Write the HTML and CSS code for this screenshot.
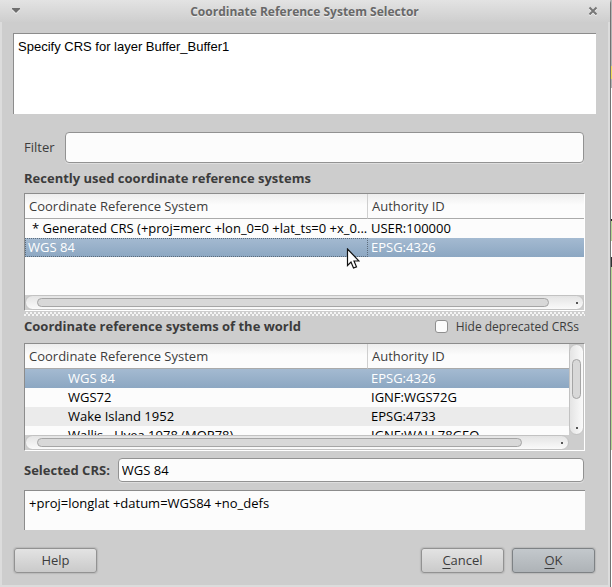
FILE: index.html
```html
<!DOCTYPE html>
<html lang="en">
<head>
<meta charset="utf-8">
<title>Coordinate Reference System Selector</title>
<link rel="stylesheet" href="styles.css">
</head>
<body>
<main class="dialog">
  <header class="titlebar">
    <button class="title-button" aria-label="Window menu"><svg width="10" height="6" viewBox="0 0 10 6"><path d="M1 2h8L5 6z" fill="#f4f4f4"/><path d="M1 0h8v1L5 5 1 1z" fill="#6e6e6e"/></svg></button>
    <h1 class="title">Coordinate Reference System Selector</h1>
    <button class="title-button" aria-label="Close"><svg width="10" height="10" viewBox="0 0 10 10"><path d="M1.5 2.5l7 7M8.5 2.5l-7 7" stroke="#f2f2f2" stroke-width="2"/><path d="M1.5 1.5l7 7M8.500 1.500l-7 7" stroke="#777" stroke-width="2"/></svg></button>
  </header>
  <div class="body">
    <div class="sunken message">Specify CRS for layer Buffer_Buffer1</div>
    <div class="selector">
      <div class="field filter">
        <label for="filter">Filter</label>
        <input class="text-input" id="filter" type="text">
      </div>
      <h2 class="heading">Recently used coordinate reference systems</h2>
      <div class="list recent">
        <div class="viewport">
          <table class="table">
            <thead><tr><th>Coordinate Reference System</th><th>Authority ID</th></tr></thead>
            <tbody>
              <tr><td class="generated">* Generated CRS (+proj=merc +lon_0=0 +lat_ts=0 +x_0...</td><td>USER:100000</td></tr>
              <tr class="selected"><td class="focused">WGS 84</td><td>EPSG:4326</td></tr>
            </tbody>
          </table>
          <svg class="cursor" width="14" height="22" viewBox="0 0 14 22"><path d="M1.500 1v16.500l3.500-3.500 2.500 6 3-1.200-2.500-5.800h5z" fill="#fff" stroke="#111" stroke-width="1.200"/></svg>
        </div>
        <div class="track"><div class="hbar"><div class="thumb"></div></div></div>
      </div>
      <div class="splitter"></div>
      <div class="world-head">
        <h2 class="heading">Coordinate reference systems of the world</h2>
        <label class="check"><input type="checkbox">Hide deprecated CRSs</label>
      </div>
      <div class="list world">
        <div class="viewport">
          <table class="table tree">
            <thead><tr><th>Coordinate Reference System</th><th>Authority ID</th></tr></thead>
            <tbody>
              <tr class="selected"><td>WGS 84</td><td>EPSG:4326</td></tr>
              <tr><td>WGS72</td><td>IGNF:WGS72G</td></tr>
              <tr class="alternate"><td>Wake Island 1952</td><td>EPSG:4733</td></tr>
              <tr><td>Wallis - Uvea 1978 (MOP78)</td><td>IGNF:WALL78GEO</td></tr>
            </tbody>
          </table>
        </div>
        <div class="track"><div class="vbar"><div class="thumb"></div></div></div>
        <div class="track"><div class="hbar"><div class="thumb"></div></div></div>
        <div class="track"></div>
      </div>
      <div class="field">
        <label class="strong" for="selected">Selected CRS:</label>
        <input class="text-input" id="selected" type="text" value="WGS 84">
      </div>
      <div class="sunken definition">+proj=longlat +datum=WGS84 +no_defs</div>
    </div>
    <footer class="actions">
      <button class="button help">Help</button>
      <button class="button"><u>C</u>ancel</button>
      <button class="button default"><u>O</u>K</button>
    </footer>
  </div>
</main>
</body>
</html>
```
FILE: styles.css
```css
* { box-sizing: border-box; }

body {
  margin: 0;
  padding-right: 1px;
  background: linear-gradient(#b4b4b4 66px, #f0dc58 66px 79px, #b4b4b4 79px 88px, #fff 88px 219px, #222 219px 221px, #b5d693 221px 241px, #fff 241px 257px, #333 257px 267px, #b5d693 267px 450px, #fff 450px);
  color: #3c3c3c;
  font: 13px/19px "Open Sans", "Noto Sans", sans-serif;
}

.dialog {
  display: flex;
  flex-direction: column;
  min-height: 100vh;
  border-right: 1px solid #737373;
  border-top-right-radius: 4px;
  background: #cdcdcd;
}

.titlebar {
  display: flex;
  align-items: center;
  height: 22px;
  padding: 0 12px 0 11px;
  background: linear-gradient(#e3e3e3, #cecece);
}

.title {
  flex: 1;
  margin: 0;
  text-align: center;
  font-size: 12px;
  font-weight: 700;
  color: #686868;
  text-shadow: 0 1px #efefef;
}

.title-button {
  display: flex;
  padding: 0;
  border: 0;
  background: none;
}

.body {
  flex: 1;
  padding: 11px 12px 12px 11px;
  border: solid #dcdcdc;
  border-width: 0 2px 2px;
}

.sunken {
  border: solid #8c8c8c;
  border-width: 1px 0 0 1px;
  background: #fcfcfc;
  color: #000;
}

.message {
  height: 81px;
  padding: 4px;
  background: #fff;
  font: 13px/18px "Liberation Sans", sans-serif;
}

.selector {
  padding: 18px 11px 0;
}

.field {
  display: flex;
  align-items: center;
  gap: 8px;
}

.text-input {
  flex: 1;
  min-width: 0;
  height: 24px;
  margin-right: 1px;
  padding: 0 3px;
  border: 1px solid #929292;
  border-radius: 4px;
  background: #fcfcfc;
  box-shadow: 0 1px #dedede;
  color: #000;
  font: inherit;
}

.filter { gap: 10px; }
.filter .text-input { height: 31px; }

.heading, .strong {
  margin: 0;
  font-size: 13px;
  font-weight: 700;
}

.selector > .heading { padding: 6px 0 5px; }

.list {
  display: grid;
  border: 1px solid;
  border-color: #8c8c8c #fff #fff #8c8c8c;
  background: #fcfcfc;
}

.recent {
  grid-template-rows: 101px 15px;
}

.world {
  grid-template: 91px 15px / 1fr 15px;
  margin-bottom: 7px;
}

.viewport {
  position: relative;
  overflow: hidden;
}

.table {
  width: 100%;
  table-layout: fixed;
  border-collapse: separate;
  border-spacing: 0;
  color: #000;
}

.table th {
  height: 25px;
  padding: 0 4px;
  border-bottom: 1px solid #aaa;
  background: linear-gradient(#ededed, #fcfcfc 45%);
  color: #3c3c3c;
  text-align: left;
  font-weight: 400;
}

.table th:first-child {
  width: 343px;
  border-right: 1px solid #cfcfcf;
}

.table td {
  height: 19px;
  padding: 0 3px;
  white-space: nowrap;
  line-height: 17px;
}

.table .generated { padding-left: 7px; }

.tree td:first-child { padding-left: 43px; }

.selected {
  background: linear-gradient(#a4bad1, #8ca7c2);
  color: #fff;
}

.selected .focused {
  outline: 1px dotted #5d6c7b;
  outline-offset: -1px;
}

.alternate { background: #ebebeb; }

.cursor {
  position: absolute;
  top: 54px;
  left: 321px;
}

.track {
  display: grid;
  background: #cdcdcd;
}

.hbar, .vbar {
  border: 1px solid #c2c2c2;
  border-radius: 8px;
}

.hbar {
  padding: 2px 34px 2px 11px;
  background:
    radial-gradient(circle, #555 1px, transparent 1px) right 4px center / 4px 4px no-repeat,
    linear-gradient(#e4e4e4, #fafafa);
}

.world .hbar { padding-right: 46px; }

.vbar {
  padding: 14px 2px 34px;
  background:
    radial-gradient(circle, #555 1px, transparent 1px) center bottom 4px / 4px 4px no-repeat,
    linear-gradient(90deg, #e4e4e4, #fafafa);
}

.thumb {
  height: 9px;
  border: 1px solid #a5a5a5;
  border-radius: 5px;
  background: #d8d8d8;
}

.vbar .thumb { height: 40px; }

.splitter {
  height: 4px;
  margin: 1px 0;
  background: repeating-conic-gradient(#f5f5f5 0 25%, #cdcdcd 0 50%) 0 0 / 4px 4px;
}

.world-head {
  display: flex;
  align-items: center;
  justify-content: space-between;
  padding: 0 6px 7px 0;
}

.check {
  display: flex;
  align-items: center;
  gap: 8px;
  font-size: 12px;
}

.check input {
  appearance: none;
  width: 13px;
  height: 13px;
  margin: 0;
  border: 1px solid #8f8f8f;
  border-radius: 3px;
  background: #fcfcfc;
}

.definition {
  height: 40px;
  margin-top: 8px;
  padding: 3px 4px;
}

.actions {
  display: flex;
  gap: 8px;
  padding: 18px 1px 0;
}

.button {
  width: 83px;
  height: 25px;
  padding: 0;
  border: 1px solid #929292;
  border-radius: 3px;
  background: linear-gradient(#e3e3e3, #cacaca);
  box-shadow: 0 0 1px 1px #bababa;
  color: #3c3c3c;
  font: inherit;
}

.button.help { margin-right: auto; }

.button.default {
  border-color: #7e8285;
  background: linear-gradient(#c3c8cc, #aeb3b7);
}

.button u { text-underline-offset: 3px; }
```
